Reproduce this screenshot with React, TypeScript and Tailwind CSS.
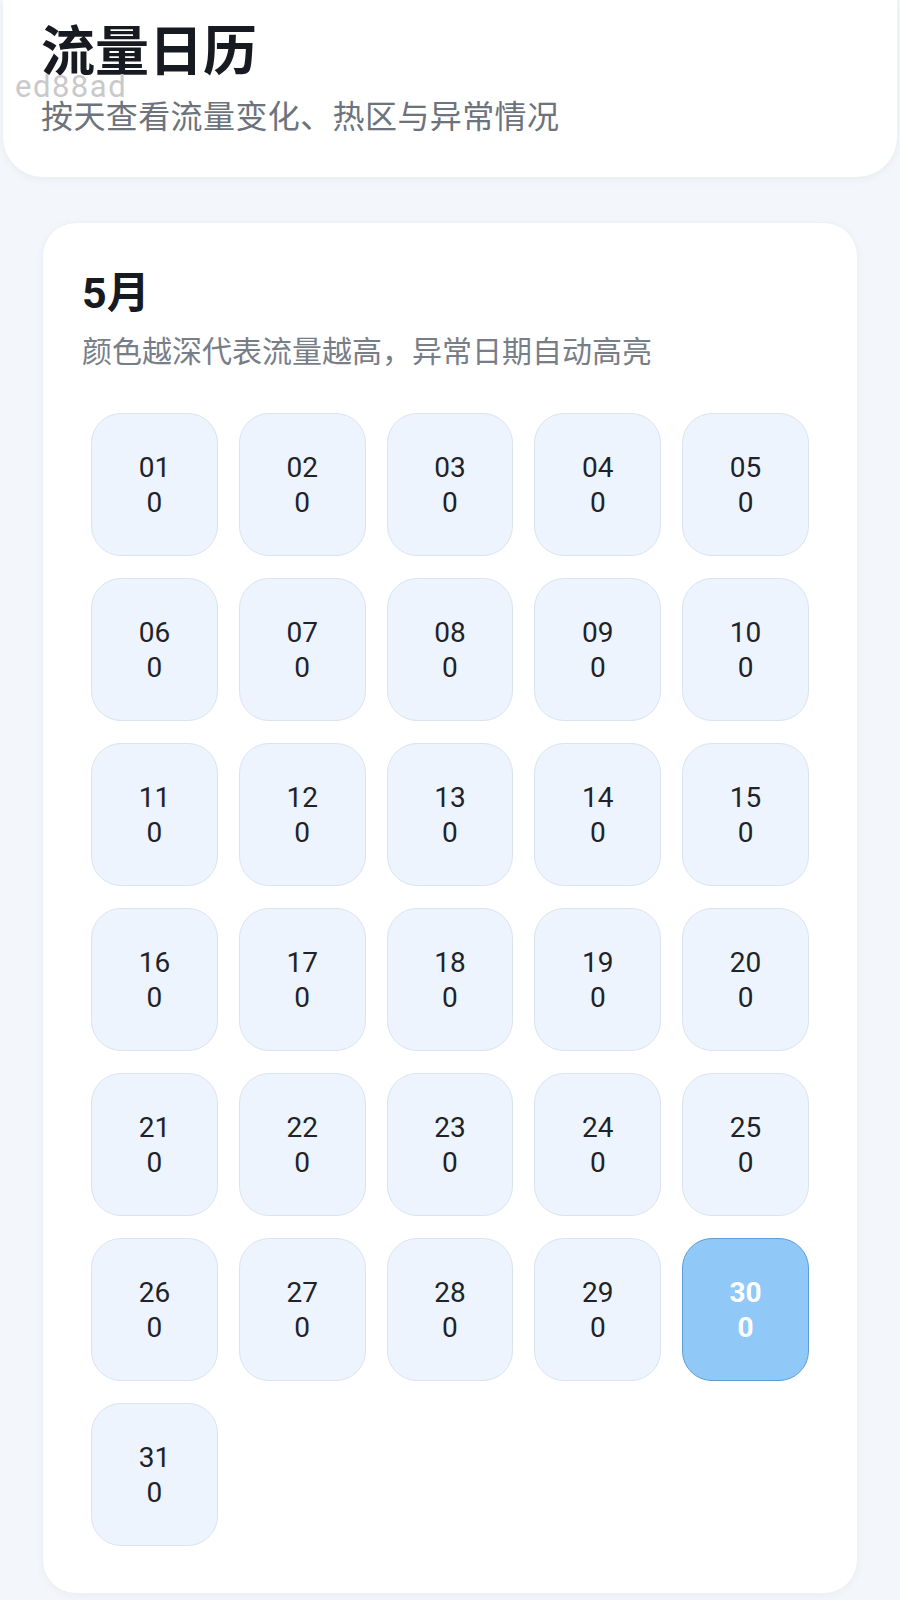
import React from "react";

const days = Array.from({ length: 31 }, (_, i) => ({
  day: String(i + 1).padStart(2, "0"),
  value: 0,
  highlight: i + 1 === 30,
}));

export default function App() {
  return (
    <div
      className="min-h-[1600px] w-[900px] bg-[#f3f6fa]"
      style={{ fontFamily: 'Roboto, "Noto Sans CJK SC", sans-serif' }}
    >
      <div className="px-[3px]">
        <div className="relative rounded-b-[40px] bg-white px-[38px] pb-[39px] pt-[20px] shadow-[0_2px_10px_rgba(15,23,42,0.05)]">
          <div className="text-[54px] font-bold leading-[65px] text-[#171a21]">流量日历</div>
          <div className="mt-[11px] text-[32px] leading-[42px] tracking-[0.4px] text-[#6c737c]">
            按天查看流量变化、热区与异常情况
          </div>
          <div className="absolute left-[12px] top-[71px] text-[31px] leading-[32px] tracking-[1.5px] text-[#c9c9c9]">
            ed88ad
          </div>
        </div>
      </div>

      <div className="mx-[42px] mt-[45px] rounded-[34px] border border-[#edf0f4] bg-white px-[39px] pb-[47px] pt-[46px] shadow-[0_2px_10px_rgba(15,23,42,0.04)]">
        <div className="text-[43px] font-bold leading-[48px] text-[#171a21]">5月</div>
        <div className="mt-[14px] text-[30px] leading-[42px] text-[#787e87]">
          颜色越深代表流量越高，异常日期自动高亮
        </div>
        <div className="mt-[40px] grid grid-cols-5 gap-x-[21px] gap-y-[22px] px-[9px]">
          {days.map((d) =>
            d.highlight ? (
              <div
                key={d.day}
                className="flex h-[143px] flex-col items-center justify-center rounded-[30px] border-[1.5px] border-[#5e9dd3] bg-[#90c9f8] text-[28px] font-bold leading-[35px] text-white"
              >
                <span>{d.day}</span>
                <span>{d.value}</span>
              </div>
            ) : (
              <div
                key={d.day}
                className="flex h-[143px] flex-col items-center justify-center rounded-[30px] border-[1.5px] border-[#d9e4ef] bg-[#edf4fd] text-[28px] leading-[35px] text-[#1f2329]"
              >
                <span>{d.day}</span>
                <span>{d.value}</span>
              </div>
            )
          )}
        </div>
      </div>
    </div>
  );
}
